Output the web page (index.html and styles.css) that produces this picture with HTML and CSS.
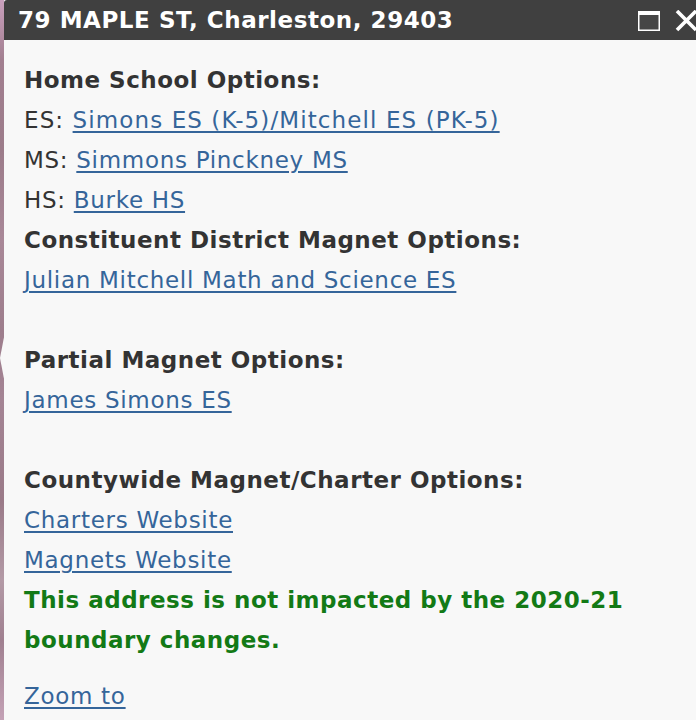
FILE: index.html
```html
<!DOCTYPE html>
<html>
<head>
<meta charset="utf-8">
<link rel="stylesheet" href="styles.css">
</head>
<body>
<div class="page">
  <div class="map-strip"></div>
  <div class="pointer"></div>
  <div class="popup">
    <div class="titlebar">
      <span class="title">79 MAPLE ST, Charleston, 29403</span>
      <div class="controls">
        <svg class="icon-max" width="22" height="20" viewBox="0 0 22 20">
          <rect x="0" y="0" width="22" height="20" fill="#ffffff"/>
          <rect x="1.5" y="4" width="19" height="14.5" fill="#464646"/>
        </svg>
        <svg class="icon-close" width="24" height="22" viewBox="0 0 24 22">
          <path d="M2 1 L21 20 M21 1 L2 20" stroke="#ffffff" stroke-width="3.6" stroke-linecap="butt" fill="none"/>
        </svg>
      </div>
    </div>
    <div class="content">
      <div class="line head">Home School Options:</div>
      <div class="line wide">ES: <a href="#">Simons ES (K-5)/Mitchell ES (PK-5)</a></div>
      <div class="line">MS: <a href="#">Simmons Pinckney MS</a></div>
      <div class="line">HS: <a href="#">Burke HS</a></div>
      <div class="line head">Constituent District Magnet Options:</div>
      <div class="line"><a href="#">Julian Mitchell Math and Science ES</a></div>
      <div class="line blank"></div>
      <div class="line head">Partial Magnet Options:</div>
      <div class="line"><a href="#">James Simons ES</a></div>
      <div class="line blank"></div>
      <div class="line head">Countywide Magnet/Charter Options:</div>
      <div class="line"><a href="#">Charters Website</a></div>
      <div class="line"><a href="#">Magnets Website</a></div>
      <div class="notice">This address is not impacted by the 2020-21 boundary changes.</div>
      <div class="line zoom"><a href="#">Zoom to</a></div>
    </div>
  </div>
</div>
</body>
</html>
```
FILE: styles.css
```css
html, body {
  margin: 0;
  padding: 0;
  background: #f8f8f8;
}
body {
  font-family: "DejaVu Sans", Verdana, sans-serif;
}
.page {
  position: relative;
  display: flex;
  width: 696px;
  height: 720px;
  overflow: hidden;
}
.map-strip {
  flex: 0 0 4px;
  background: linear-gradient(180deg,
    #c9a0bd 0px, #a27f90 60px, #9c7c8a 150px, #a98898 240px,
    #9d7d8c 330px, #a48494 400px, #9a7a88 500px, #b39aa6 580px,
    #a08090 640px, #c4a2b6 720px);
}
.pointer {
  position: absolute;
  left: 0;
  top: 332px;
  width: 0;
  height: 0;
  border-top: 26px solid transparent;
  border-bottom: 26px solid transparent;
  border-right: 5px solid #f8f8f8;
}
.popup {
  flex: 1 1 auto;
  background: #f8f8f8;
  border-top-left-radius: 3px;
  overflow: hidden;
}
.titlebar {
  display: flex;
  align-items: center;
  height: 40px;
  background: #404040;
  padding-left: 14px;
}
.title {
  color: #ffffff;
  font-weight: bold;
  font-size: 23px;
  letter-spacing: 0.55px;
  line-height: 40px;
  white-space: nowrap;
}
.controls {
  margin-left: auto;
  display: flex;
  align-items: center;
  gap: 15px;
  margin-right: -3px;
  padding-top: 1px;
}
.icon-max, .icon-close {
  display: block;
}
.content {
  padding: 20px 20px 0 20px;
  font-size: 23px;
  line-height: 40px;
  color: #333333;
  letter-spacing: 0.7px;
}
.line {
  height: 40px;
  white-space: nowrap;
}
.wide {
  letter-spacing: 1.1px;
}
.head {
  font-weight: bold;
  letter-spacing: 0.5px;
}
a {
  color: #35659a;
  text-decoration: underline;
  text-decoration-thickness: 1.5px;
  text-underline-offset: 3px;
}
.notice {
  color: #137a16;
  font-weight: bold;
  letter-spacing: 0.5px;
  width: 620px;
  margin-bottom: 16px;
}
```
